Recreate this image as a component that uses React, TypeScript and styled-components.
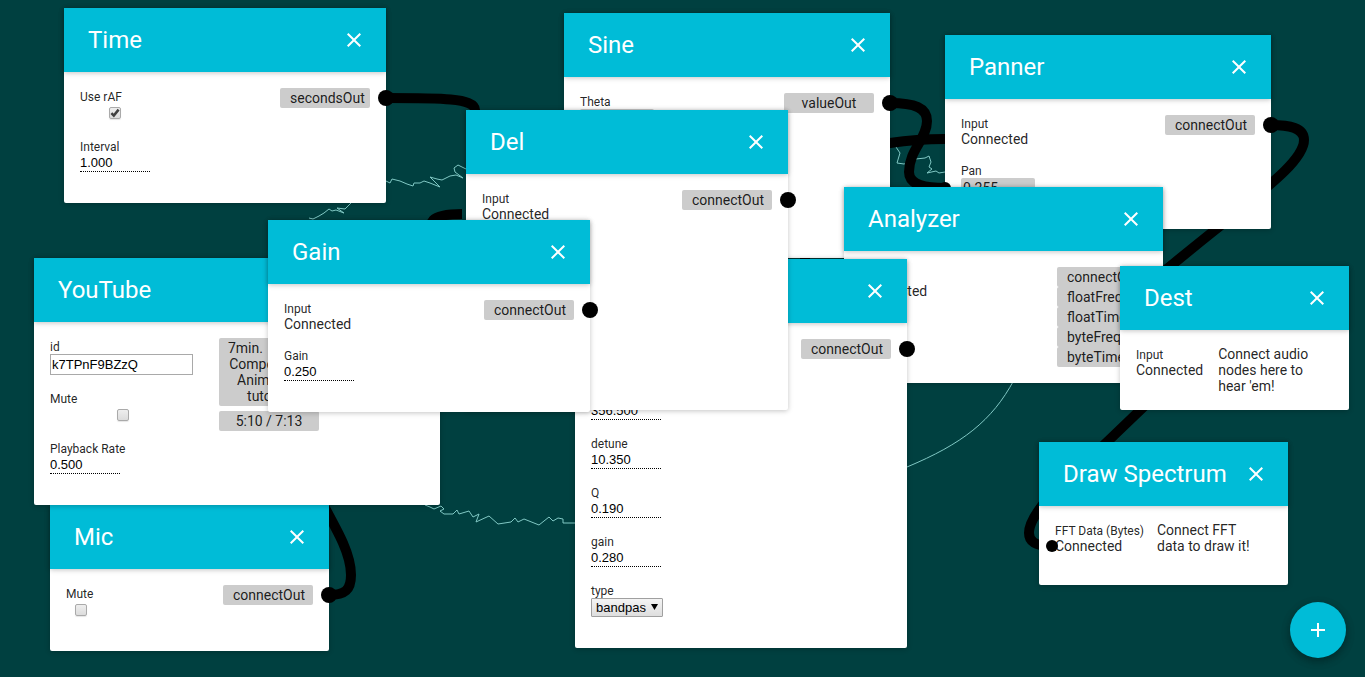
import React, { useId } from "react";
import styled, { createGlobalStyle } from "styled-components";
import { MdAdd, MdClose } from "react-icons/md";

const GlobalStyle = createGlobalStyle`
  *, *::before, *::after { box-sizing: border-box; }
  body {
    margin: 0;
    background: #004040;
    color: rgba(0, 0, 0, 0.87);
    font-family: Roboto, "Liberation Sans", sans-serif;
    font-size: 14px;
    line-height: 16px;
  }
`;

const paperShadow = "0 1px 6px rgba(0, 0, 0, 0.12), 0 1px 4px rgba(0, 0, 0, 0.12)";

const Stage = styled.main`
  position: relative;
  min-height: 100vh;
  overflow: hidden;
`;

const Wires = styled.svg`
  position: absolute;
  top: 0;
  left: 0;
  width: 100%;
  height: 100%;
  fill: none;
`;

const NodeCard = styled.section<{ $x: number; $y: number; $w: number }>`
  position: absolute;
  left: ${(p) => p.$x}px;
  top: ${(p) => p.$y}px;
  width: ${(p) => p.$w}px;
  background: #fff;
  border-radius: 2px;
  box-shadow: ${paperShadow};
`;

const NodeHeader = styled.header`
  position: relative;
  display: flex;
  align-items: center;
  justify-content: space-between;
  height: 64px;
  padding: 0 20px 0 24px;
  background: #00bcd7;
  color: #fff;
  box-shadow: ${paperShadow};
`;

const Title = styled.h1`
  margin: 0;
  font-size: 24px;
  font-weight: 400;
  line-height: 64px;
  white-space: nowrap;
`;

const CloseButton = styled.button`
  display: flex;
  padding: 0;
  border: 0;
  background: none;
  color: #fff;
  cursor: pointer;
`;

const NodeBody = styled.div<{ $minHeight?: number }>`
  display: flex;
  padding: 16px;
  min-height: ${(p) => (p.$minHeight ? `${p.$minHeight}px` : "0")};
`;

const Inputs = styled.div<{ $w?: number }>`
  flex: none;
  width: ${(p) => (p.$w ? `${p.$w}px` : "auto")};
`;

const Info = styled.div`
  width: 130px;
  padding: 0 15px;
`;

const Outputs = styled.div`
  width: 90px;
  margin-left: auto;
`;

const FieldBox = styled.div`
  position: relative;
  display: flex;
  flex-direction: column;
  align-items: flex-start;
  margin-bottom: 15px;
`;

const Caption = styled.label`
  display: block;
  height: 16px;
  font-size: 12px;
  line-height: 18px;
  white-space: nowrap;
`;

const NumberInput = styled.input`
  width: 70px;
  height: 18px;
  padding: 0 0 1px;
  border: 0;
  border-bottom: 1px dotted #000;
  background: transparent;
  color: #000;
  font: 13px "Liberation Sans", Arial, sans-serif;
`;

const TextInput = styled.input`
  width: 143px;
  height: 21px;
  padding: 1px;
  border: 1px solid #a9a9a9;
  color: #000;
  font: 13px "Liberation Sans", Arial, sans-serif;
`;

const CheckWrap = styled.span<{ $w: number }>`
  display: flex;
  justify-content: center;
  width: ${(p) => p.$w}px;
  height: 19px;
  padding-top: 3px;
`;

const CheckSeat = styled.span`
  position: relative;
  display: flex;
  width: 12px;
  height: 12px;
`;

const CheckInput = styled.input`
  appearance: none;
  width: 12px;
  height: 12px;
  margin: 0;
  border: 1px solid #aaa;
  border-radius: 2px;
  background: linear-gradient(#eee, #dcdcdc);
  box-shadow: 0 1px 1px rgba(0, 0, 0, 0.1);

  & + svg { visibility: hidden; }
  &:checked + svg { visibility: visible; }
`;

const CheckMark = styled.svg`
  position: absolute;
  inset: 0;
  width: 12px;
  height: 12px;
  fill: none;
  stroke: #404040;
  stroke-width: 2.5;
  pointer-events: none;
`;

const SelectWrap = styled.span`
  position: relative;
  display: flex;
  width: 72px;
  height: 19px;
`;

const SelectInput = styled.select`
  appearance: none;
  width: 100%;
  height: 19px;
  padding: 0 16px 1px 4px;
  border: 1px solid #a0a0a0;
  border-radius: 1px;
  background: linear-gradient(#f4f4f4, #dedede);
  color: #000;
  font: 13px "Liberation Sans", Arial, sans-serif;
  text-overflow: clip;
`;

const SelectArrow = styled.svg`
  position: absolute;
  top: 6px;
  right: 5px;
  width: 7px;
  height: 6px;
  pointer-events: none;
`;

const DrivenValue = styled.output`
  width: 74px;
  padding: 2px;
  border-radius: 2px;
  background: #ccc;
`;

const Chip = styled.div`
  width: 90px;
  padding: 2px 10px;
  border-radius: 2px;
  background: #ccc;
  text-align: center;
  white-space: nowrap;
`;

const Readout = styled.div`
  padding: 2px 5px;
  margin-bottom: 5px;
  border-radius: 2px;
  background: #ccc;
  text-align: center;
`;

const OutputRow = styled.div`
  position: relative;
`;

const Plug = styled.span`
  position: absolute;
  top: 2px;
  right: -24px;
  width: 16px;
  height: 16px;
  border-radius: 50%;
  background: #000;
`;

const InputPlug = styled.span<{ $x: number; $y: number }>`
  position: absolute;
  left: ${(p) => p.$x}px;
  top: ${(p) => p.$y}px;
  width: 12px;
  height: 12px;
  border-radius: 50%;
  background: #000;
`;

const AddButton = styled.button`
  position: absolute;
  right: 19px;
  bottom: 19px;
  display: flex;
  align-items: center;
  justify-content: center;
  width: 56px;
  height: 56px;
  padding: 0;
  border: 0;
  border-radius: 50%;
  background: #00bcd7;
  color: #fff;
  box-shadow: 0 3px 10px rgba(0, 0, 0, 0.16), 0 3px 10px rgba(0, 0, 0, 0.23);
  cursor: pointer;
`;

type NodeProps = {
  title: string;
  x: number;
  y: number;
  w: number;
  minHeight?: number;
  children: React.ReactNode;
};

function Node({ title, x, y, w, minHeight, children }: NodeProps) {
  return (
    <NodeCard $x={x} $y={y} $w={w}>
      <NodeHeader>
        <Title>{title}</Title>
        <CloseButton type="button" aria-label={`Close ${title}`}>
          <MdClose size={24} />
        </CloseButton>
      </NodeHeader>
      <NodeBody $minHeight={minHeight}>{children}</NodeBody>
    </NodeCard>
  );
}

function NumberField({ label, value }: { label: string; value: string }) {
  const id = useId();
  return (
    <FieldBox>
      <Caption htmlFor={id}>{label}</Caption>
      <NumberInput id={id} defaultValue={value} />
    </FieldBox>
  );
}

function CheckField({ label, width, checked }: { label: string; width: number; checked?: boolean }) {
  const id = useId();
  return (
    <FieldBox>
      <Caption htmlFor={id}>{label}</Caption>
      <CheckWrap $w={width}>
        <CheckSeat>
          <CheckInput id={id} type="checkbox" defaultChecked={checked} />
          <CheckMark viewBox="0 0 12 12" aria-hidden="true">
            <path d="M2.4 6.2 L4.8 8.6 L9.6 2.6" />
          </CheckMark>
        </CheckSeat>
      </CheckWrap>
    </FieldBox>
  );
}

function Connected({ label = "Input", children }: { label?: string; children?: React.ReactNode }) {
  return (
    <FieldBox>
      <Caption as="span">{label}</Caption>
      <span>Connected</span>
      {children}
    </FieldBox>
  );
}

function DrivenField({ label, value, children }: { label: string; value: string; children?: React.ReactNode }) {
  const id = useId();
  return (
    <FieldBox>
      <Caption htmlFor={id}>{label}</Caption>
      <DrivenValue id={id}>{value}</DrivenValue>
      {children}
    </FieldBox>
  );
}

function OutputList({ names }: { names: string[] }) {
  return (
    <Outputs>
      {names.map((name) => (
        <OutputRow key={name}>
          <Chip>{name}</Chip>
          <Plug />
        </OutputRow>
      ))}
    </Outputs>
  );
}

const cables = [
  "M386 98 C440 98 475 98 475 110 C475 119 520 119 564 119",
  "M590 310 C640 310 520 240 440 232 C425 224 430 214 462 214",
  "M890 103 C915 103 927 108 927 121 C927 139 909 150 909 172 C909 183 920 188 945 188",
  "M945 139 C925 139 910 140 890 143 C840 150 805 190 805 262",
  "M1271 125 C1290 125 1304 128 1304 140 C1304 161 1262 191 1215 230 C1185 254 1165 270 1130 300",
  "M1180 372 L1107 442 C1082 466 1029 508 1029 533 C1029 541 1034 546 1052 546",
  "M329 595 C345 595 351 590 351 575 C351 555 340 535 320 499",
];

const traces = [
  "M309 218 L313 219 L319 216 L324 213 L329 209 L332 211 L336 210 L344 213 L337 208 L345 209 L351 203",
  "M386 181 L390 183 L392 179 L400 181 L407 184 L413 186 L414 183 L420 183 L424 181 L430 183 L440 187 L430 177 L437 179 L442 180 L450 176 L456 175 L463 178 L455 172 L454 168 L458 165 L466 169",
  "M896 147 L900 153 L897 163 L904 164 L911 162 L916 159 L925 158 L929 156 L931 162 L929 167 L932 169 L927 173 L936 171 L939 173 L945 172",
  "M425 505 L430 507 L434 509 L441 506 L444 509 L440 511 L444 514 L453 514 L457 510 L459 514 L469 511 L473 517 L479 514 L476 522 L489 516 L498 524 L511 522 L515 518 L518 522 L524 519 L539 525 L549 517 L553 521 L558 518 L563 519 L563 523 L575 523",
  "M1014 380 C992 421 962 444 907 467",
];

export default function App() {
  return (
    <Stage>
      <GlobalStyle />
      <Wires aria-hidden="true">
        <g stroke="#80c8c4" strokeWidth="1">
          {traces.map((d) => (
            <path key={d} d={d} />
          ))}
        </g>
        <g stroke="#000" strokeWidth="10">
          {cables.map((d) => (
            <path key={d} d={d} />
          ))}
        </g>
      </Wires>

      <Node title="Time" x={64} y={8} w={322}>
        <Inputs>
          <CheckField label="Use rAF" width={70} checked />
          <NumberField label="Interval" value="1.000" />
        </Inputs>
        <OutputList names={["secondsOut"]} />
      </Node>

      <Node title="Sine" x={564} y={13} w={326}>
        <Inputs>
          <DrivenField label="Theta" value="0.000" />
          <NumberField label="Amplitude" value="1.000" />
          <NumberField label="Offset" value="0.000" />
        </Inputs>
        <OutputList names={["valueOut"]} />
      </Node>

      <Node title="Panner" x={945} y={35} w={326}>
        <Inputs>
          <Connected />
          <DrivenField label="Pan" value="0.255">
            <InputPlug $x={-22} $y={20} />
          </DrivenField>
        </Inputs>
        <OutputList names={["connectOut"]} />
      </Node>

      <Node title="Mic" x={50} y={505} w={279}>
        <Inputs>
          <CheckField label="Mute" width={30} />
        </Inputs>
        <OutputList names={["connectOut"]} />
      </Node>

      <Node title="YouTube" x={34} y={258} w={406}>
        <Inputs $w={154}>
          <FieldBox>
            <Caption htmlFor="video-id">id</Caption>
            <TextInput id="video-id" defaultValue="k7TPnF9BZzQ" />
          </FieldBox>
          <CheckField label="Mute" width={146} />
          <NumberField label="Playback Rate" value="0.500" />
        </Inputs>
        <Info>
          <Readout>7min. {"\u00a0"}Adobe Composition Animation tutorial</Readout>
          <Readout>5:10 / 7:13</Readout>
        </Info>
      </Node>

      <Node title="Analyzer" x={844} y={187} w={319}>
        <Inputs>
          <Connected />
        </Inputs>
        <OutputList names={["connectOut", "floatFreqOut", "floatTimeOut", "byteFreqOut", "byteTimeOut"]} />
      </Node>

      <Node title="Filter" x={575} y={259} w={332}>
        <Inputs>
          <Connected />
          <NumberField label="frequency" value="356.500" />
          <NumberField label="detune" value="10.350" />
          <NumberField label="Q" value="0.190" />
          <NumberField label="gain" value="0.280" />
          <FieldBox>
            <Caption htmlFor="filter-type">type</Caption>
            <SelectWrap>
              <SelectInput id="filter-type" defaultValue="bandpass">
                <option value="bandpass">bandpass</option>
              </SelectInput>
              <SelectArrow viewBox="0 0 7 6" aria-hidden="true">
                <path d="M0 0 H7 L3.5 6 Z" />
              </SelectArrow>
            </SelectWrap>
          </FieldBox>
        </Inputs>
        <OutputList names={["connectOut"]} />
      </Node>

      <Node title="Del" x={466} y={110} w={322} minHeight={236}>
        <Inputs>
          <Connected />
          <NumberField label="Delay" value="0.500" />
        </Inputs>
        <OutputList names={["connectOut"]} />
      </Node>

      <Node title="Gain" x={268} y={220} w={322}>
        <Inputs>
          <Connected />
          <NumberField label="Gain" value="0.250" />
        </Inputs>
        <OutputList names={["connectOut"]} />
      </Node>

      <Node title="Dest" x={1120} y={266} w={229}>
        <Inputs>
          <Connected />
        </Inputs>
        <Info>Connect audio nodes here to hear 'em!</Info>
      </Node>

      <Node title="Draw Spectrum" x={1039} y={442} w={249}>
        <Inputs $w={87}>
          <Connected label="FFT Data (Bytes)">
            <InputPlug $x={-9} $y={18} />
          </Connected>
        </Inputs>
        <Info>Connect FFT data to draw it!</Info>
      </Node>

      <AddButton type="button" aria-label="Add node">
        <MdAdd size={24} />
      </AddButton>
    </Stage>
  );
}
